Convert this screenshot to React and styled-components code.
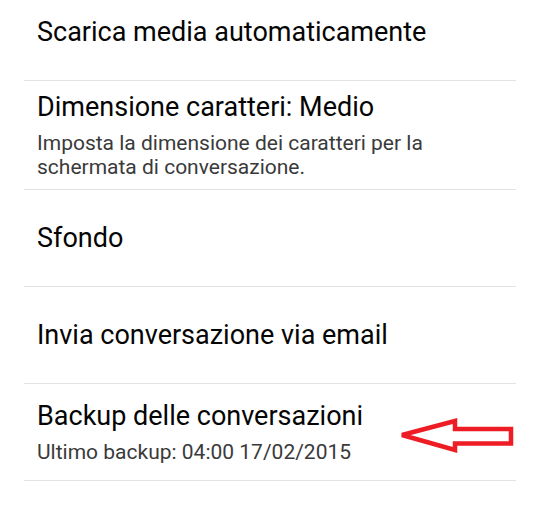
import React from "react";
import styled, { createGlobalStyle } from "styled-components";

const GlobalStyle = createGlobalStyle`
    html, body {
        margin: 0;
        padding: 0;
        background: #ffffff;
    }
    body {
        font-family: Roboto, "Noto Sans", "Liberation Sans", sans-serif;
        overflow: hidden;
    }
`;

const Screen = styled.div`
    width: 540px;
    height: 513px;
    overflow: hidden;
    background: #ffffff;
`;

const List = styled.ul`
    list-style: none;
    margin: -16px 24px 0 24px;
    padding: 0;
`;

const Item = styled.li`
    position: relative;
    min-height: 97px;
    box-sizing: border-box;
    padding: 10px 0 10px 13px;
    display: flex;
    flex-direction: column;
    justify-content: center;
    border-bottom: 1px solid #e2e2e2;
`;

const Title = styled.div`
    font-size: 27px;
    line-height: 32px;
    color: #050505;
`;

const Summary = styled.div`
    font-size: 21px;
    line-height: 24px;
    color: #3a3a3a;
    margin-top: 8px;
    max-width: 440px;
`;

// red annotation drawn over the last row
const Arrow = styled.svg`
    position: absolute;
    left: 377px;
    top: 31px;
    overflow: visible;
`;

const settings = [
    { title: "Scarica media automaticamente" },
    {
        title: "Dimensione caratteri: Medio",
        summary: "Imposta la dimensione dei caratteri per la schermata di conversazione.",
    },
    { title: "Sfondo" },
    { title: "Invia conversazione via email" },
    { title: "Backup delle conversazioni", summary: "Ultimo backup: 04:00 17/02/2015", marked: true },
];

function PointerArrow() {
    return (
        <Arrow width="116" height="40" viewBox="0 0 116 40">
            <polygon
                points="1,20 54,6 54,14 110,14 110,28.5 54,28.5 54,35"
                fill="none"
                stroke="#ee1c24"
                strokeWidth="4.5"
                strokeLinejoin="miter"
                strokeMiterlimit="2"
            />
        </Arrow>
    );
}

function App() {
    return (
        <Screen>
            <GlobalStyle />
            <List>
                {settings.map((s) => (
                    <Item key={s.title}>
                        <Title>{s.title}</Title>
                        {s.summary && <Summary>{s.summary}</Summary>}
                        {s.marked && <PointerArrow />}
                    </Item>
                ))}
            </List>
        </Screen>
    );
}

export default App;
